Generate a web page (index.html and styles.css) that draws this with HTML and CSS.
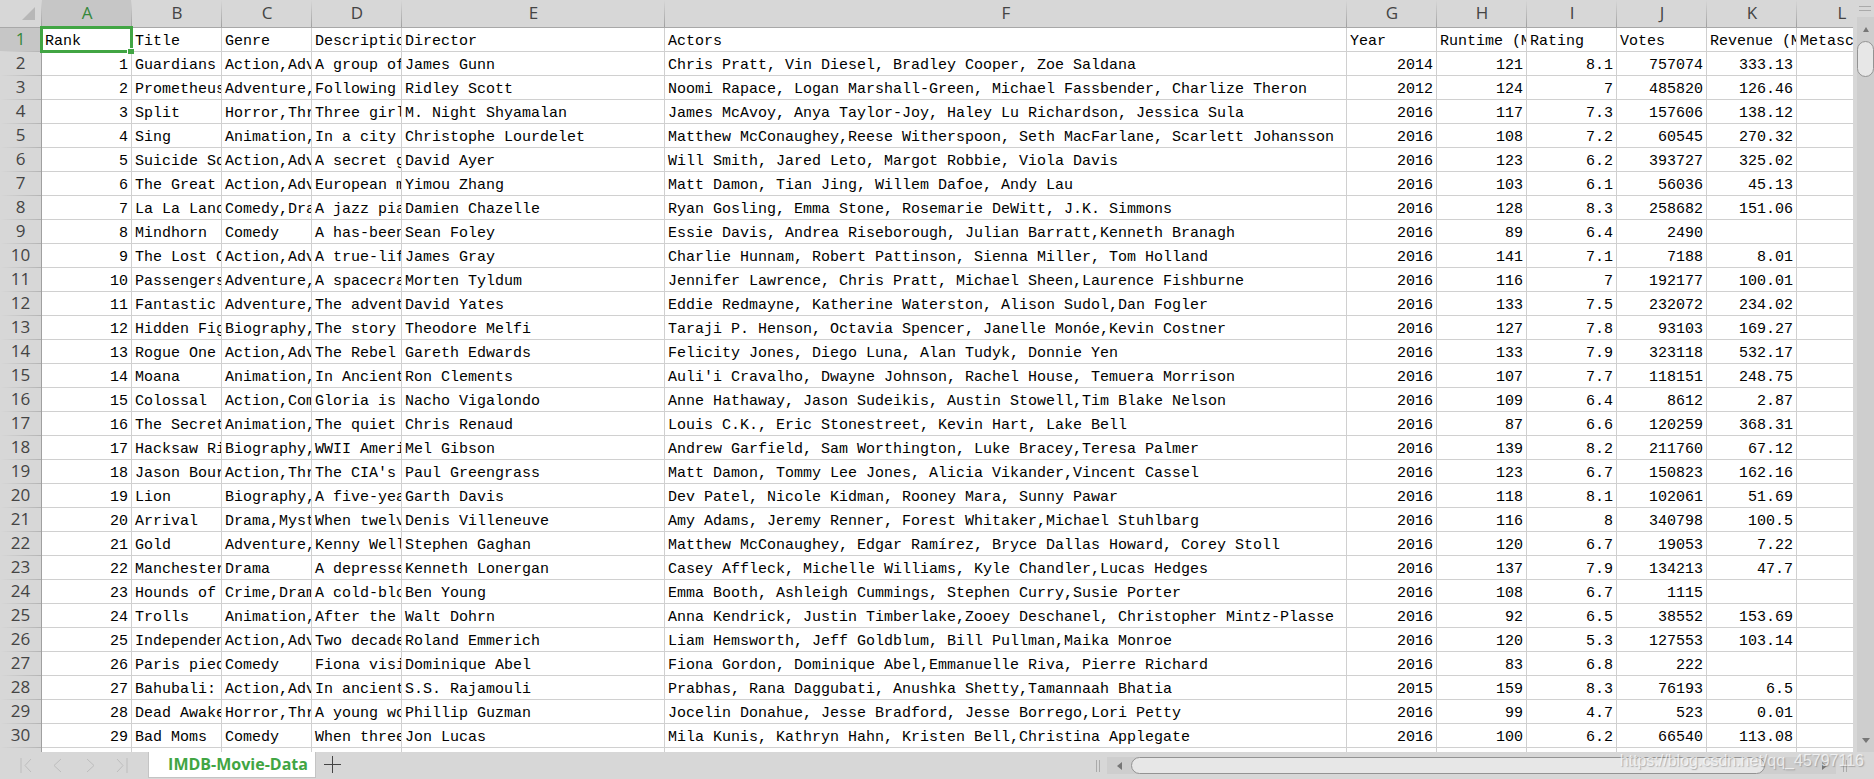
FILE: index.html
```html
<!DOCTYPE html>
<html lang="en">
<head>
<meta charset="utf-8">
<title>IMDB-Movie-Data</title>
<link rel="stylesheet" href="styles.css">
</head>
<body>
<main class="workspace">
<div class="viewport">
<table class="grid">
<colgroup>
<col class="col-head"><col class="col-std"><col class="col-std"><col class="col-std"><col class="col-std"><col class="col-director"><col class="col-actors"><col class="col-std"><col class="col-std"><col class="col-std"><col class="col-std"><col class="col-std"><col class="col-std">
</colgroup>
<thead>
<tr><td class="corner"><svg class="corner-mark" viewBox="0 0 13 13" aria-hidden="true"><path d="M13 0V13H0z"/></svg></td><th class="active">A</th><th>B</th><th>C</th><th>D</th><th>E</th><th>F</th><th>G</th><th>H</th><th>I</th><th>J</th><th>K</th><th>L</th></tr>
</thead>
<tbody>
<tr class="labels"><th class="active">1<td class="selected">Rank<td>Title<td>Genre<td>Description<td>Director<td>Actors<td>Year<td>Runtime (Minutes)<td>Rating<td>Votes<td>Revenue (Millions)<td>Metascore
<tr><th>2<td>1<td>Guardians of<td>Action,Adventure<td>A group of<td>James Gunn<td>Chris Pratt, Vin Diesel, Bradley Cooper, Zoe Saldana<td>2014<td>121<td>8.1<td>757074<td>333.13<td>
<tr><th>3<td>2<td>Prometheus<td>Adventure,Mystery<td>Following clues<td>Ridley Scott<td>Noomi Rapace, Logan Marshall-Green, Michael Fassbender, Charlize Theron<td>2012<td>124<td>7<td>485820<td>126.46<td>
<tr><th>4<td>3<td>Split<td>Horror,Thriller<td>Three girls<td>M. Night Shyamalan<td>James McAvoy, Anya Taylor-Joy, Haley Lu Richardson, Jessica Sula<td>2016<td>117<td>7.3<td>157606<td>138.12<td>
<tr><th>5<td>4<td>Sing<td>Animation,Comedy<td>In a city of<td>Christophe Lourdelet<td>Matthew McConaughey,Reese Witherspoon, Seth MacFarlane, Scarlett Johansson<td>2016<td>108<td>7.2<td>60545<td>270.32<td>
<tr><th>6<td>5<td>Suicide Squad<td>Action,Adventure<td>A secret government<td>David Ayer<td>Will Smith, Jared Leto, Margot Robbie, Viola Davis<td>2016<td>123<td>6.2<td>393727<td>325.02<td>
<tr><th>7<td>6<td>The Great Wall<td>Action,Adventure<td>European mercenaries<td>Yimou Zhang<td>Matt Damon, Tian Jing, Willem Dafoe, Andy Lau<td>2016<td>103<td>6.1<td>56036<td>45.13<td>
<tr><th>8<td>7<td>La La Land<td>Comedy,Drama<td>A jazz pianist<td>Damien Chazelle<td>Ryan Gosling, Emma Stone, Rosemarie DeWitt, J.K. Simmons<td>2016<td>128<td>8.3<td>258682<td>151.06<td>
<tr><th>9<td>8<td>Mindhorn<td>Comedy<td>A has-been actor<td>Sean Foley<td>Essie Davis, Andrea Riseborough, Julian Barratt,Kenneth Branagh<td>2016<td>89<td>6.4<td>2490<td><td>
<tr><th>10<td>9<td>The Lost City<td>Action,Adventure<td>A true-life<td>James Gray<td>Charlie Hunnam, Robert Pattinson, Sienna Miller, Tom Holland<td>2016<td>141<td>7.1<td>7188<td>8.01<td>
<tr><th>11<td>10<td>Passengers<td>Adventure,Drama<td>A spacecraft<td>Morten Tyldum<td>Jennifer Lawrence, Chris Pratt, Michael Sheen,Laurence Fishburne<td>2016<td>116<td>7<td>192177<td>100.01<td>
<tr><th>12<td>11<td>Fantastic Beasts<td>Adventure,Family<td>The adventures<td>David Yates<td>Eddie Redmayne, Katherine Waterston, Alison Sudol,Dan Fogler<td>2016<td>133<td>7.5<td>232072<td>234.02<td>
<tr><th>13<td>12<td>Hidden Figures<td>Biography,Drama<td>The story of<td>Theodore Melfi<td>Taraji P. Henson, Octavia Spencer, Janelle Monóe,Kevin Costner<td>2016<td>127<td>7.8<td>93103<td>169.27<td>
<tr><th>14<td>13<td>Rogue One<td>Action,Adventure<td>The Rebel Alliance<td>Gareth Edwards<td>Felicity Jones, Diego Luna, Alan Tudyk, Donnie Yen<td>2016<td>133<td>7.9<td>323118<td>532.17<td>
<tr><th>15<td>14<td>Moana<td>Animation,Adventure<td>In Ancient Polynesia<td>Ron Clements<td>Auli'i Cravalho, Dwayne Johnson, Rachel House, Temuera Morrison<td>2016<td>107<td>7.7<td>118151<td>248.75<td>
<tr><th>16<td>15<td>Colossal<td>Action,Comedy<td>Gloria is an<td>Nacho Vigalondo<td>Anne Hathaway, Jason Sudeikis, Austin Stowell,Tim Blake Nelson<td>2016<td>109<td>6.4<td>8612<td>2.87<td>
<tr><th>17<td>16<td>The Secret Life<td>Animation,Adventure<td>The quiet life<td>Chris Renaud<td>Louis C.K., Eric Stonestreet, Kevin Hart, Lake Bell<td>2016<td>87<td>6.6<td>120259<td>368.31<td>
<tr><th>18<td>17<td>Hacksaw Ridge<td>Biography,Drama<td>WWII American<td>Mel Gibson<td>Andrew Garfield, Sam Worthington, Luke Bracey,Teresa Palmer<td>2016<td>139<td>8.2<td>211760<td>67.12<td>
<tr><th>19<td>18<td>Jason Bourne<td>Action,Thriller<td>The CIA's most<td>Paul Greengrass<td>Matt Damon, Tommy Lee Jones, Alicia Vikander,Vincent Cassel<td>2016<td>123<td>6.7<td>150823<td>162.16<td>
<tr><th>20<td>19<td>Lion<td>Biography,Drama<td>A five-year-old<td>Garth Davis<td>Dev Patel, Nicole Kidman, Rooney Mara, Sunny Pawar<td>2016<td>118<td>8.1<td>102061<td>51.69<td>
<tr><th>21<td>20<td>Arrival<td>Drama,Mystery<td>When twelve<td>Denis Villeneuve<td>Amy Adams, Jeremy Renner, Forest Whitaker,Michael Stuhlbarg<td>2016<td>116<td>8<td>340798<td>100.5<td>
<tr><th>22<td>21<td>Gold<td>Adventure,Drama<td>Kenny Wells<td>Stephen Gaghan<td>Matthew McConaughey, Edgar Ramírez, Bryce Dallas Howard, Corey Stoll<td>2016<td>120<td>6.7<td>19053<td>7.22<td>
<tr><th>23<td>22<td>Manchester by<td>Drama<td>A depressed<td>Kenneth Lonergan<td>Casey Affleck, Michelle Williams, Kyle Chandler,Lucas Hedges<td>2016<td>137<td>7.9<td>134213<td>47.7<td>
<tr><th>24<td>23<td>Hounds of Love<td>Crime,Drama<td>A cold-blooded<td>Ben Young<td>Emma Booth, Ashleigh Cummings, Stephen Curry,Susie Porter<td>2016<td>108<td>6.7<td>1115<td><td>
<tr><th>25<td>24<td>Trolls<td>Animation,Adventure<td>After the Bergens<td>Walt Dohrn<td>Anna Kendrick, Justin Timberlake,Zooey Deschanel, Christopher Mintz-Plasse<td>2016<td>92<td>6.5<td>38552<td>153.69<td>
<tr><th>26<td>25<td>Independence<td>Action,Adventure<td>Two decades<td>Roland Emmerich<td>Liam Hemsworth, Jeff Goldblum, Bill Pullman,Maika Monroe<td>2016<td>120<td>5.3<td>127553<td>103.14<td>
<tr><th>27<td>26<td>Paris pieds nus<td>Comedy<td>Fiona visits<td>Dominique Abel<td>Fiona Gordon, Dominique Abel,Emmanuelle Riva, Pierre Richard<td>2016<td>83<td>6.8<td>222<td><td>
<tr><th>28<td>27<td>Bahubali: The<td>Action,Adventure<td>In ancient India<td>S.S. Rajamouli<td>Prabhas, Rana Daggubati, Anushka Shetty,Tamannaah Bhatia<td>2015<td>159<td>8.3<td>76193<td>6.5<td>
<tr><th>29<td>28<td>Dead Awake<td>Horror,Thriller<td>A young woman<td>Phillip Guzman<td>Jocelin Donahue, Jesse Bradford, Jesse Borrego,Lori Petty<td>2016<td>99<td>4.7<td>523<td>0.01<td>
<tr><th>30<td>29<td>Bad Moms<td>Comedy<td>When three<td>Jon Lucas<td>Mila Kunis, Kathryn Hahn, Kristen Bell,Christina Applegate<td>2016<td>100<td>6.2<td>66540<td>113.08<td>
<tr><th><td><td><td><td><td><td><td><td><td><td><td><td>
</tbody>
</table>
</div>
<div class="vscroll">
<span class="split split-h"></span>
<div class="vtrack">
<button class="arrow" aria-label="Scroll up"><svg width="8" height="5" viewBox="0 0 8 5"><path d="M1 5L4 0 7 5z"/></svg></button>
<button class="vthumb" aria-label="Vertical scroll handle"></button>
<button class="arrow arrow-down" aria-label="Scroll down"><svg width="8" height="5" viewBox="0 0 8 5"><path d="M0 0H8L4 5z"/></svg></button>
</div>
</div>
</main>
<footer class="bar">
<nav class="sheet-nav" aria-label="Sheet navigation">
<button aria-label="First sheet"><svg width="12" height="15" viewBox="0 0 12 15"><path d="M1 0V15M11 1L5 7.500 11 14"/></svg></button>
<button aria-label="Previous sheet"><svg width="12" height="15" viewBox="0 0 12 15"><path d="M9 1L2 7.500 9 14"/></svg></button>
<button aria-label="Next sheet"><svg width="12" height="15" viewBox="0 0 12 15"><path d="M3 1L10 7.500 3 14"/></svg></button>
<button aria-label="Last sheet"><svg width="12" height="15" viewBox="0 0 12 15"><path d="M11 0V15M1 1L7 7.500 1 14"/></svg></button>
</nav>
<button class="tab">IMDB-Movie-Data</button>
<button class="add" aria-label="Add sheet"><svg width="17" height="17" viewBox="0 0 17 17"><path d="M8.500 0V17M0 8.500H17"/></svg></button>
<div class="hscroll">
<span class="split split-v"></span>
<div class="htrack">
<button class="arrow" aria-label="Scroll left"><svg width="5" height="8" viewBox="0 0 5 8"><path d="M5 0V8L0 4z"/></svg></button>
<button class="hthumb" aria-label="Horizontal scroll handle"></button>
<button class="arrow arrow-right" aria-label="Scroll right"><svg width="5" height="8" viewBox="0 0 5 8"><path d="M0 0V8L5 4z"/></svg></button>
</div>
<span class="split split-v"></span>
</div>
</footer>
<div class="watermark">https://blog.csdn.net/qq_45797116</div>
</body>
</html>
```

FILE: styles.css
```css
* {
  box-sizing: border-box;
}

body {
  position: relative;
  display: flex;
  flex-direction: column;
  height: 100vh;
  margin: 0;
  overflow: hidden;
  background: #d7d7d7;
  font-family: "Open Sans", "Noto Sans", sans-serif;
}

button {
  padding: 0;
  border: 0;
  background: none;
  font: inherit;
}

svg {
  display: block;
}

.workspace {
  display: flex;
  flex: 1;
  min-height: 0;
}

.viewport {
  flex: 1;
  min-width: 0;
  overflow: hidden;
  background: #fff;
}

/* Cell grid */
.grid {
  width: 1887px;
  table-layout: fixed;
  border-collapse: separate;
  border-spacing: 0;
}

.col-head { width: 42px; }
.col-std { width: 90px; }
.col-director { width: 263px; }
.col-actors { width: 682px; }

.grid thead tr {
  height: 28px;
}

.grid thead th,
.corner {
  padding: 0;
  border-bottom: 1px solid #a8a8a8;
  background: linear-gradient(#d7d7d7, #a0a0a0) right / 1px 100% no-repeat #d7d7d7;
  color: #444;
  font-size: 17px;
  font-weight: 400;
  line-height: 25px;
  vertical-align: top;
}

.corner {
  vertical-align: middle;
}

.corner-mark {
  width: 13px;
  height: 13px;
  margin: 0 0 0 22px;
  fill: #b7b7b7;
}

.grid thead .active {
  background-color: #c6c6c6;
  color: #35883a;
}

.grid tbody th {
  height: 24px;
  padding: 0;
  border-right: 1px solid #a0a0a0;
  background: linear-gradient(90deg, #d7d7d7, #b4b4b4) bottom / 100% 1px no-repeat #d7d7d7;
  color: #444;
  font-size: 17px;
  font-weight: 400;
  line-height: 22px;
  vertical-align: top;
}

.grid tbody .active {
  background-color: #c6c6c6;
  color: #35883a;
}

.grid tbody td {
  height: 24px;
  padding: 4px 3px 0;
  overflow: hidden;
  border-right: 1px solid #d0d0d0;
  border-bottom: 1px solid #d0d0d0;
  color: #000;
  font-family: "Liberation Mono", monospace;
  font-size: 15px;
  line-height: 19px;
  text-align: right;
  vertical-align: top;
  white-space: nowrap;
}

.grid tbody td:nth-child(n+3):nth-child(-n+7),
.grid .labels td {
  text-align: left;
}

.grid tbody .selected {
  position: relative;
  overflow: visible;
}

.selected::before {
  position: absolute;
  inset: -2px;
  border: 3px solid #41a543;
  content: "";
}

.selected::after {
  position: absolute;
  right: -3px;
  bottom: -3px;
  width: 6px;
  height: 5px;
  border: solid #fff;
  border-width: 1px 0 0 1px;
  background: #41a543;
  content: "";
}

/* Scroll bars */
.vscroll {
  display: flex;
  flex-direction: column;
  width: 21px;
  padding-left: 4px;
}

.split-h {
  width: 12px;
  height: 5px;
  margin: 6px 2px;
  border: solid #aaa;
  border-width: 1px 0;
}

.vtrack {
  display: flex;
  flex: 1;
  flex-direction: column;
  align-items: center;
  background: #cecece;
}

.arrow {
  display: grid;
  width: 24px;
  height: 24px;
  place-items: center;
}

.arrow svg {
  fill: #777;
}

.vtrack .arrow {
  width: 17px;
}

.arrow-down {
  margin-top: auto;
}

.vthumb {
  width: 17px;
  height: 36px;
  border: 1px solid #939393;
  border-radius: 9px;
  background: #e7e7e7;
}

.bar {
  display: flex;
  height: 27px;
}

.sheet-nav {
  display: flex;
  gap: 20px;
  align-items: center;
  width: 148px;
  padding-left: 20px;
}

.sheet-nav path {
  fill: none;
  stroke: #bdbdbd;
}

.tab {
  width: 168px;
  height: 26px;
  padding-left: 12px;
  border: solid #c4c4c4;
  border-width: 0 1px 1px;
  background: #fff;
  color: #41a543;
  font-size: 16px;
  font-weight: 700;
  line-height: 25px;
  white-space: nowrap;
}

.add {
  height: 25px;
  margin-left: 8px;
}

.add path {
  stroke: #444;
}

.hscroll {
  display: flex;
  gap: 7px;
  align-items: center;
  width: 778px;
  padding-right: 27px;
  margin-left: auto;
}

.split-v {
  width: 4px;
  height: 12px;
  border: solid #aaa;
  border-width: 0 1px;
}

.htrack {
  display: flex;
  flex: 1;
  align-items: center;
  height: 17px;
  background: #cecece;
}

.hthumb {
  width: 87%;
  height: 17px;
  border: 1px solid #939393;
  border-radius: 9px;
  background: #e7e7e7;
}

.arrow-right {
  margin-left: auto;
}

.watermark {
  position: absolute;
  right: 10px;
  bottom: 8px;
  color: rgba(255, 255, 255, 0.7);
  font-family: "Liberation Sans", Arial, sans-serif;
  font-size: 16px;
  line-height: 20px;
  text-shadow: 1px 1px 1px rgba(120, 120, 120, 0.5);
}
```
